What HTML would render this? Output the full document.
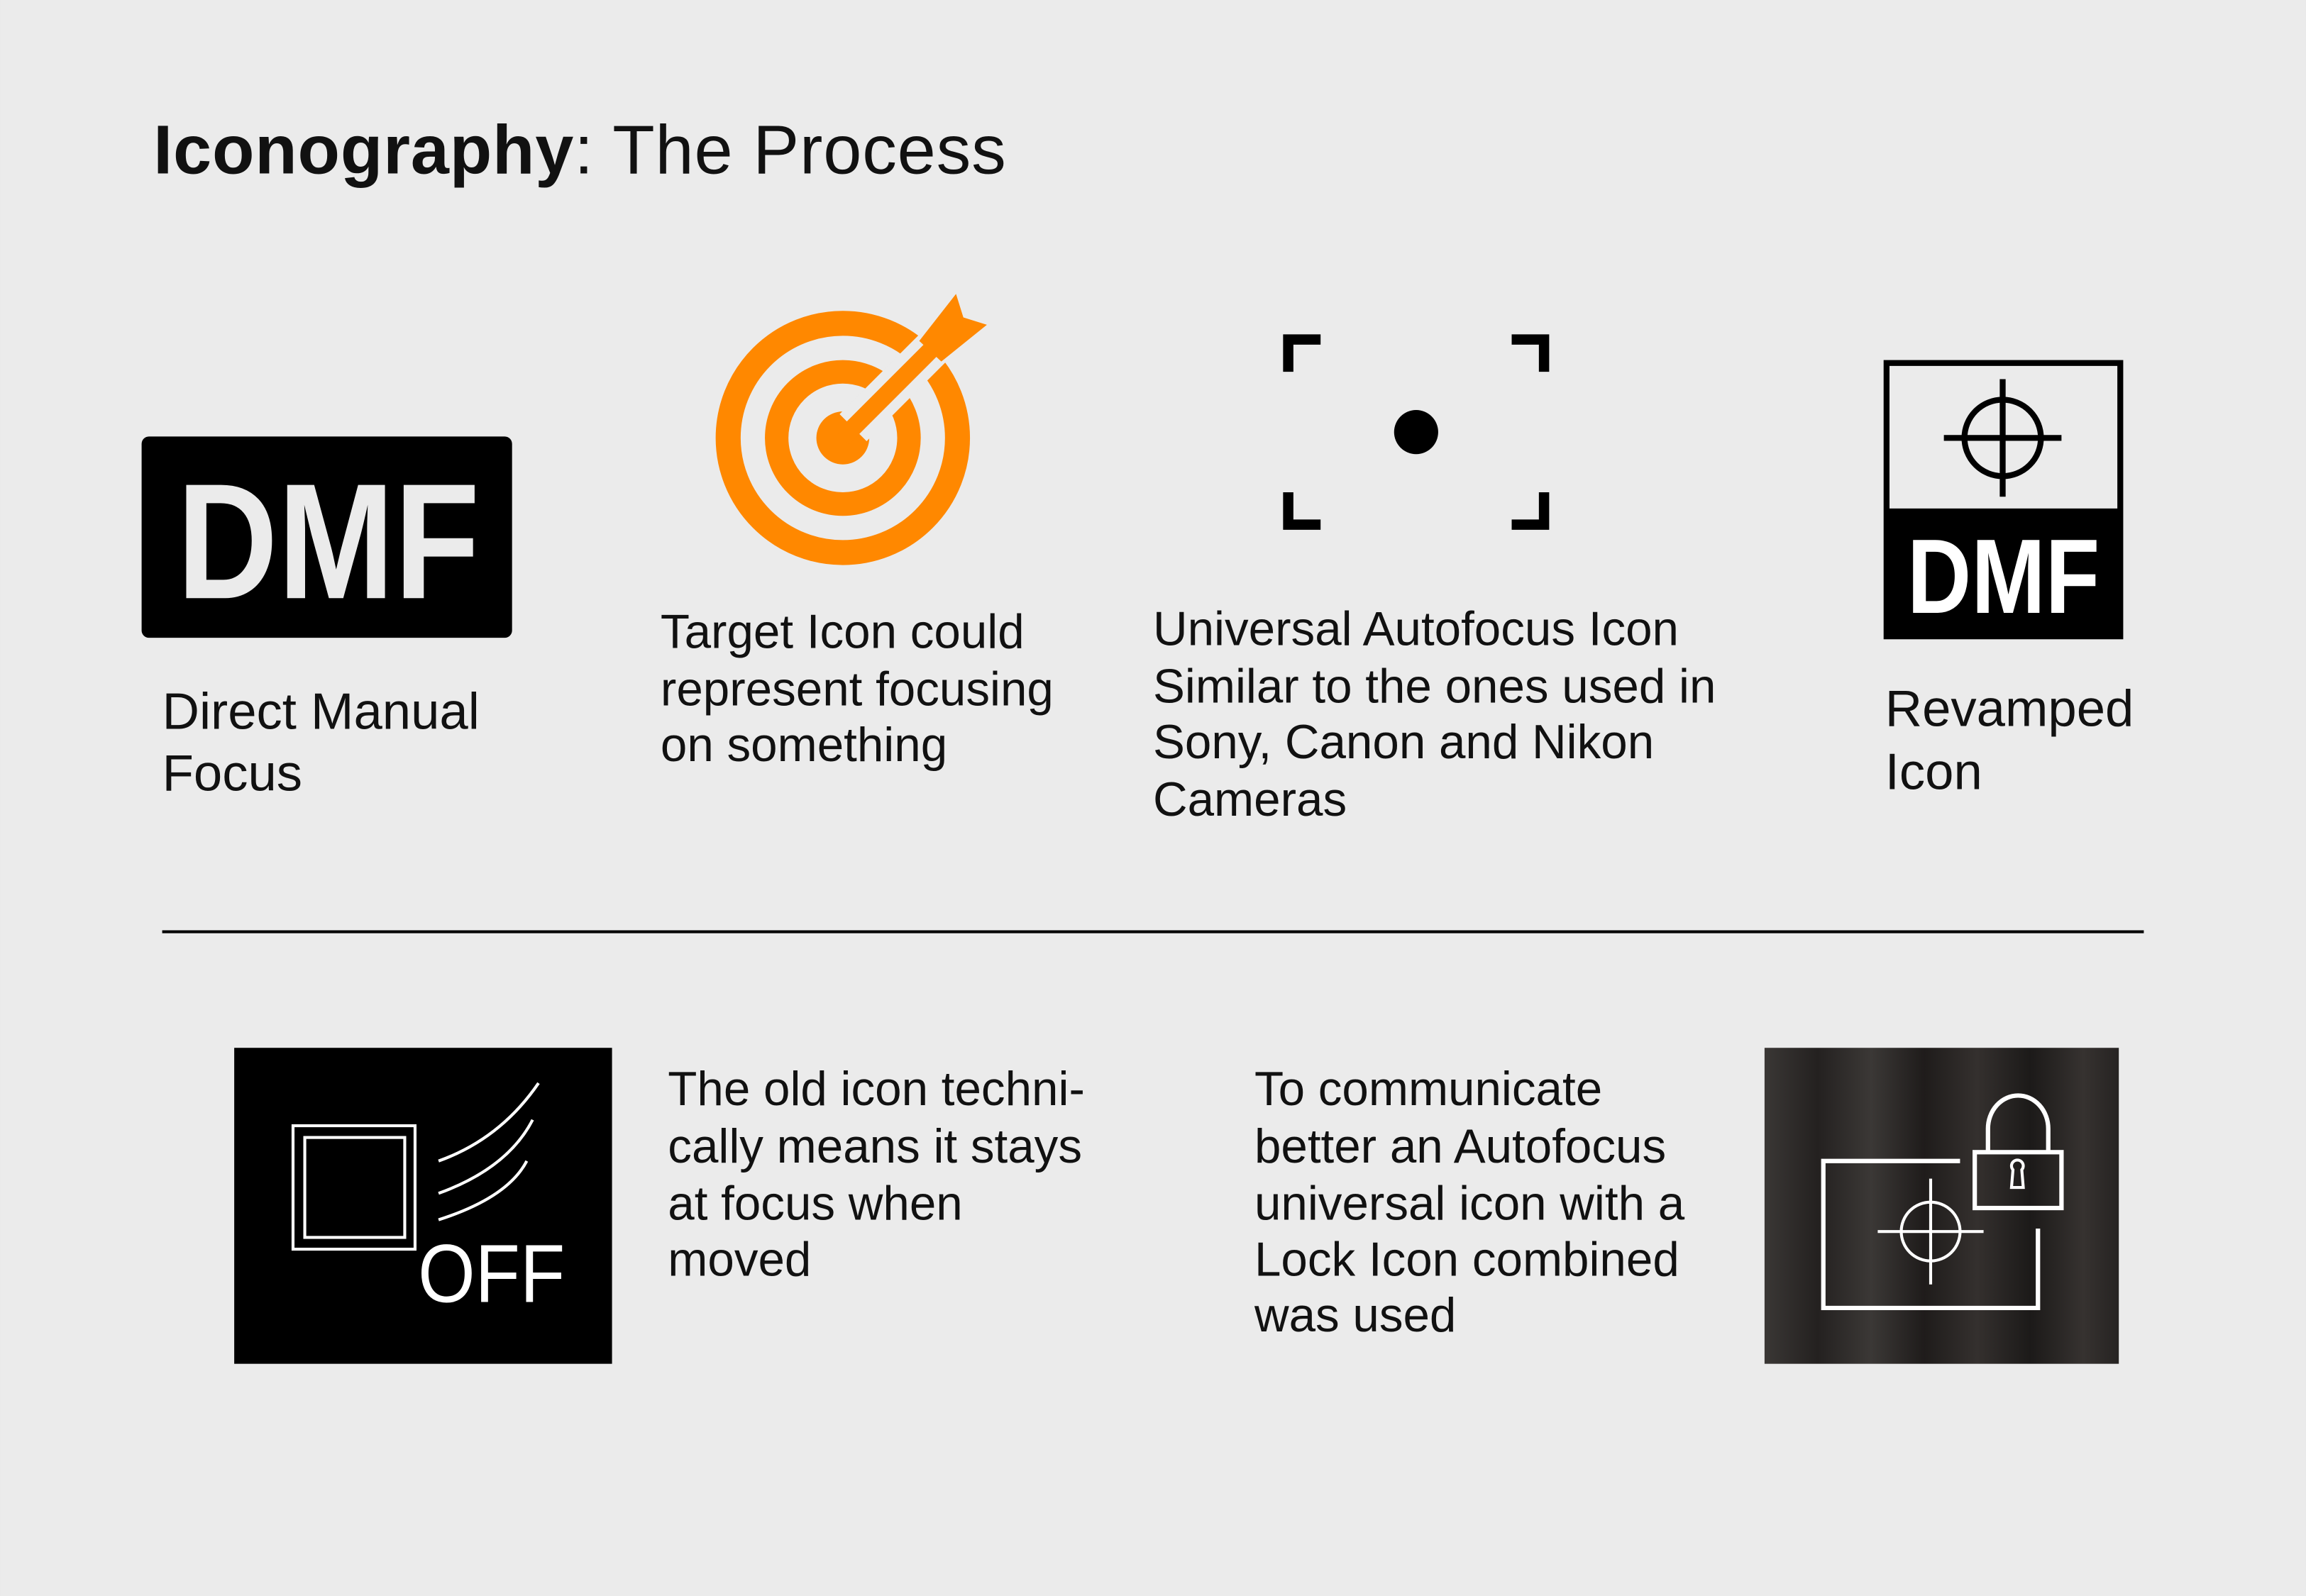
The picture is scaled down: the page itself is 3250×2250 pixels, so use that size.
<!DOCTYPE html>
<html><head><meta charset="utf-8"><style>
html,body{margin:0;padding:0;background:#ebebeb;}
svg{display:block;}
text{font-family:"Liberation Sans",sans-serif;}
</style></head><body>
<svg width="3250" height="2250" viewBox="0 0 1568 1086" xmlns="http://www.w3.org/2000/svg">
<defs>
<linearGradient id="wood" x1="0" x2="1" y1="0" y2="0">
<stop offset="0" stop-color="#3a3735"/><stop offset="0.15" stop-color="#242120"/><stop offset="0.3" stop-color="#3b3836"/><stop offset="0.45" stop-color="#1f1c1b"/><stop offset="0.6" stop-color="#34302e"/><stop offset="0.75" stop-color="#1c1a19"/><stop offset="0.9" stop-color="#363230"/><stop offset="1" stop-color="#262322"/>
</linearGradient>
</defs>
<rect width="1568" height="1086" fill="#ebebeb"/>
<text x="104" y="118" font-size="47" fill="#111" textLength="580" lengthAdjust="spacing"><tspan font-weight="bold">Iconography</tspan>: The Process</text>

<!-- DMF -->
<rect x="96" y="297" width="252" height="137" rx="5" fill="#000"/>
<text x="120" y="407" font-size="112" font-weight="bold" fill="#ebebeb" textLength="206" lengthAdjust="spacingAndGlyphs">DMF</text>
<g font-size="35" fill="#111">
<text x="110" y="496">Direct Manual</text>
<text x="110" y="538">Focus</text>
</g>

<!-- Target -->
<g fill="none" stroke="#ff8800">
<circle cx="573" cy="298" r="78" stroke-width="17"/>
<circle cx="573" cy="298" r="45" stroke-width="16"/>
</g>
<circle cx="573" cy="298" r="18" fill="#ff8800"/>
<line x1="580" y1="291" x2="655" y2="216" stroke="#ebebeb" stroke-width="26"/>
<line x1="573" y1="298" x2="640" y2="231" stroke="#ff8800" stroke-width="12"/>
<polygon points="625,232 650,200 655,216 671,221 640,246" fill="#ff8800"/>
<g font-size="32.5" fill="#111">
<text x="449" y="441">Target Icon could</text>
<text x="449" y="480">represent focusing</text>
<text x="449" y="518">on something</text>
</g>

<!-- AF -->
<g fill="none" stroke="#000" stroke-width="7">
<path d="M876,253 V231 H898"/>
<path d="M1028,231 H1050 V253"/>
<path d="M876,335 V357 H898"/>
<path d="M1028,357 H1050 V335"/>
</g>
<circle cx="963" cy="294" r="15" fill="#000"/>
<g font-size="32.5" fill="#111">
<text x="784" y="439">Universal Autofocus Icon</text>
<text x="784" y="478">Similar to the ones used in</text>
<text x="784" y="516">Sony, Canon and Nikon</text>
<text x="784" y="555">Cameras</text>
</g>

<!-- Revamped -->
<rect x="1283" y="247" width="159" height="186" fill="#ebebeb" stroke="#000" stroke-width="4"/>
<rect x="1283" y="346" width="159" height="87" fill="#000"/>
<g stroke="#000" stroke-width="4" fill="none">
<circle cx="1362" cy="298" r="26"/>
<line x1="1322" y1="298" x2="1402" y2="298"/>
<line x1="1362" y1="258" x2="1362" y2="338"/>
</g>
<text x="1297" y="417" font-size="72" font-weight="bold" fill="#fff" textLength="131" lengthAdjust="spacingAndGlyphs">DMF</text>
<g font-size="35" fill="#111">
<text x="1282" y="494">Revamped</text>
<text x="1282" y="537">Icon</text>
</g>

<line x1="110" y1="634" x2="1458" y2="634" stroke="#000" stroke-width="2"/>

<!-- OFF -->
<rect x="159" y="713" width="257" height="215" fill="#000"/>
<g stroke="#fff" stroke-width="2" fill="none">
<rect x="199" y="766" width="83" height="84"/>
<rect x="207" y="774" width="68" height="68"/>
<path d="M298,790 Q340,775 366,737"/>
<path d="M298,812 Q345,795 362,762"/>
<path d="M298,830 Q345,815 358,790"/>
</g>
<text x="284" y="886" font-size="56" fill="#fff" textLength="100" lengthAdjust="spacingAndGlyphs">OFF</text>
<g font-size="32.5" fill="#111">
<text x="454" y="752">The old icon techni-</text>
<text x="454" y="791">cally means it stays</text>
<text x="454" y="830">at focus when</text>
<text x="454" y="868">moved</text>
<text x="853" y="752">To communicate</text>
<text x="853" y="791">better an Autofocus</text>
<text x="853" y="830">universal icon with a</text>
<text x="853" y="868">Lock Icon combined</text>
<text x="853" y="906">was used</text>
</g>

<!-- Lock photo -->
<rect x="1200" y="713" width="241" height="215" fill="url(#wood)"/>
<g stroke="#fff" stroke-width="3" fill="none">
<path d="M1333,790 H1240 V890 H1386 V836"/>
<rect x="1343" y="784" width="59" height="38"/>
<path d="M1352,784 V768 A20,22 0 0 1 1393,768 V784"/>
<circle cx="1313" cy="838" r="20" stroke-width="2"/>
<line x1="1277" y1="838" x2="1349" y2="838" stroke-width="2"/>
<line x1="1313" y1="802" x2="1313" y2="874" stroke-width="2"/>
<path d="M1369,796 a4,4 0 1 1 6,0 l1,12 h-8 z" stroke-width="2"/>
</g>
</svg>
</body></html>
